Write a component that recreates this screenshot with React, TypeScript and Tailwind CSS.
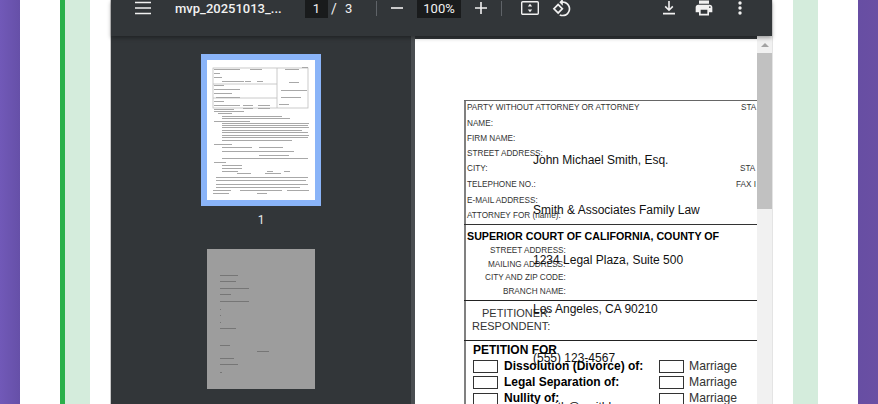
const labels: [string, number, number, string][] = [
  ['PARTY WITHOUT ATTORNEY OR ATTORNEY', 467, 102, 'text-[8.2px]'],
  ['NAME:', 467, 118, 'text-[8.2px]'],
  ['FIRM NAME:', 467, 133, 'text-[8.2px]'],
  ['STREET ADDRESS:', 467, 148, 'text-[8.2px]'],
  ['CITY:', 467, 163, 'text-[8.2px]'],
  ['TELEPHONE NO.:', 467, 179, 'text-[8.2px]'],
  ['E-MAIL ADDRESS:', 467, 195, 'text-[8.2px]'],
  ['ATTORNEY FOR (name):', 467, 210, 'text-[8.2px]'],
  ['STA', 741, 102, 'text-[8.2px]'],
  ['STA', 740, 163, 'text-[8.2px]'],
  ['FAX I', 736, 179, 'text-[8.2px]'],
  ['STREET ADDRESS:', 490, 245, 'text-[8.2px]'],
  ['MAILING ADDRESS:', 488, 259, 'text-[8.2px]'],
  ['CITY AND ZIP CODE:', 485, 272, 'text-[8.2px]'],
  ['BRANCH NAME:', 503, 286, 'text-[8.2px]'],
  ['PETITIONER:', 482, 307, 'text-[11px]'],
  ['RESPONDENT:', 472, 320, 'text-[11px]'],
  ['Marriage', 689, 360, 'text-[12.2px]'],
  ['Marriage', 689, 376, 'text-[12.2px]'],
  ['Marriage', 689, 392, 'text-[12.2px]'],
]

const boldLabels: [string, number, number, string][] = [
  ['SUPERIOR COURT OF CALIFORNIA, COUNTY OF', 467, 229, 'text-[10.7px]'],
  ['PETITION FOR', 473, 343, 'text-[12px]'],
  ['Dissolution (Divorce) of:', 504, 359, 'text-[12px]'],
  ['Legal Separation of:', 504, 375, 'text-[12px]'],
  ['Nullity of:', 504, 391, 'text-[12px]'],
]

const filled: [string, number][] = [
  ['John Michael Smith, Esq.', 153],
  ['Smith & Associates Family Law', 203],
  ['1234 Legal Plaza, Suite 500', 253],
  ['Los Angeles, CA 90210', 302],
  ['(555) 123-4567', 351],
  ['j.smith@smithlaw.com', 400],
]

const boxes: [number, number][] = [
  [473, 360],
  [473, 376],
  [473, 393],
  [659, 360],
  [659, 376],
  [659, 393],
]

// rough text lines in the first thumbnail: x, y, width
const thumbLines: [number, number, number][] = [
  [7, 9, 26], [43, 9, 12], [78, 9, 14], [95, 7, 6], [7, 13, 6], [7, 17, 8], [15, 21, 22], [38, 21, 6], [50, 21, 6],
  [7, 25, 10], [7, 29, 26], [7, 33, 18], [82, 22, 10], [74, 30, 26], [74, 37, 20],
  [9, 37, 24], [7, 41, 10], [7, 45, 26], [7, 49, 20], [36, 45, 10], [51, 45, 12], [36, 48, 10], [51, 48, 12], [72, 44, 10],
  [7, 51, 30], [11, 53, 14], [15, 56, 60], [15, 58, 68], [7, 61, 36],
  [15, 63, 87], [15, 65, 86], [15, 67, 87], [15, 70, 80], [15, 72, 86], [15, 75, 87], [15, 77, 86], [15, 80, 70],
  [7, 84, 18], [15, 87, 30], [52, 87, 24], [15, 91, 72], [52, 95, 30], [15, 98, 86],
  [7, 102, 12], [15, 105, 20], [15, 108, 20], [15, 111, 16], [60, 111, 6], [77, 111, 6],
  [30, 113, 14], [58, 113, 16], [9, 117, 92], [9, 120, 90], [9, 124, 92], [9, 127, 84],
  [6, 130, 18], [33, 130, 42], [80, 130, 22], [6, 133, 16], [50, 133, 10],
]

function ThumbOne() {
  return (
    <svg width="108" height="140" viewBox="0 0 108 140" className="bg-white">
      <g className="blur-[0.5px]">
        <g stroke="#bdbdbd" strokeWidth="0.8" fill="none">
          <rect x="6" y="8" width="95" height="40" />
          <path d="M70 8V48M6 24H70M6 38H70" />
        </g>
        <g fill="#a8a8a8">
          {thumbLines.map(([x, y, w], i) => (
            <rect key={i} x={x} y={y} width={w} height="1" />
          ))}
        </g>
      </g>
    </svg>
  )
}

const thumbTwoLines: [number, number, number][] = [
  [13, 26, 18], [13, 32, 16], [13, 39, 29], [13, 45, 11], [13, 52, 29], [13, 60, 1], [13, 66, 1], [13, 73, 1],
  [13, 79, 16], [13, 96, 10], [50, 102, 12], [13, 109, 14], [13, 115, 18], [13, 123, 2],
]

function ThumbTwo() {
  return (
    <svg width="108" height="140" viewBox="0 0 108 140" className="bg-[#9d9d9d]">
      <g fill="#666" opacity="0.7" className="blur-[0.4px]">
        {thumbTwoLines.map(([x, y, w], i) => (
          <rect key={i} x={x} y={y} width={w} height="1" />
        ))}
      </g>
    </svg>
  )
}

function Toolbar() {
  return (
    <div className="relative z-10 flex h-[36px] shrink-0 items-start bg-[#323639] pl-[24px] text-[#f1f1f1] shadow-[0_2px_4px_rgba(0,0,0,0.35)]">
      <svg width="16" height="16" viewBox="0 0 16 16">
        <path d="M0 2.5H16M0 8H16M0 13.5H16" stroke="#f1f1f1" strokeWidth="1.6" />
      </svg>
      <span className="ml-[24px] w-[108px] whitespace-nowrap text-[13px] font-medium leading-[18px]">mvp_20251013_...</span>
      <span className="ml-[22px] flex h-[18px] w-[23px] items-center justify-center bg-[#191b1c] text-[13px]">1</span>
      <span className="w-[12px] text-center text-[14px] leading-[18px]">/</span>
      <span className="ml-[5px] w-[10px] text-[13px] leading-[18px]">3</span>
      <span className="ml-[21px] mt-[1px] h-[15px] w-px bg-[#5f6368]" />
      <svg width="12" height="16" viewBox="0 0 12 16" className="ml-[14px]">
        <path d="M0 8H12" stroke="#f1f1f1" strokeWidth="1.6" />
      </svg>
      <span className="ml-[14px] flex h-[18px] w-[44px] items-center justify-center bg-[#191b1c] text-[13px]">100%</span>
      <svg width="12" height="16" viewBox="0 0 12 16" className="ml-[14px]">
        <path d="M0 8H12M6 2V14" stroke="#f1f1f1" strokeWidth="1.6" />
      </svg>
      <span className="ml-[14px] mt-[1px] h-[15px] w-px bg-[#5f6368]" />
      <svg width="18" height="16" viewBox="0 0 18 16" className="ml-[19px]">
        <rect x="0.7" y="1.7" width="16.6" height="12.6" rx="1" fill="none" stroke="#f1f1f1" strokeWidth="1.4" />
        <path d="M9 3.8L11.2 6.6H6.8ZM9 12.2L6.8 9.4H11.2Z" fill="#f1f1f1" />
      </svg>
      <svg width="20" height="20" viewBox="0 0 24 24" className="ml-[13px] -mt-[2px]" fill="#f1f1f1">
        <path d="M7.34 6.41L.86 12.9l6.49 6.48 6.49-6.48-6.5-6.49zM3.69 12.9l3.66-3.66L11 12.9l-3.66 3.66-3.65-3.66zm15.67-6.26C17.61 4.88 15.3 4 13 4V.76L8.76 5 13 9.24V6c1.79 0 3.58.68 4.95 2.05 2.73 2.73 2.73 7.17 0 9.9C16.58 19.32 14.79 20 13 20c-.97 0-1.94-.21-2.84-.61l-1.49 1.49C10.02 21.62 11.51 22 13 22c2.3 0 4.61-.88 6.36-2.64 3.52-3.51 3.52-9.21 0-12.72z" />
      </svg>
      <svg width="14" height="16" viewBox="0 0 14 16" className="ml-auto">
        <path d="M7 1V10M3.2 6.4L7 10.2L10.8 6.4M1 13.6H13" fill="none" stroke="#f1f1f1" strokeWidth="1.6" />
      </svg>
      <svg width="20" height="20" viewBox="0 0 24 24" className="ml-[18px] -mt-[2px]" fill="#f1f1f1">
        <path d="M19 8H5c-1.66 0-3 1.34-3 3v6h4v4h12v-4h4v-6c0-1.66-1.34-3-3-3zm-3 11H8v-5h8v5zm3-7c-.55 0-1-.45-1-1s.45-1 1-1 1 .45 1 1-.45 1-1 1zm-1-9H6v4h12V3z" />
      </svg>
      <svg width="4" height="16" viewBox="0 0 4 16" className="ml-[24px] mr-[30px]" fill="#f1f1f1">
        <circle cx="2" cy="3" r="1.7" />
        <circle cx="2" cy="8" r="1.7" />
        <circle cx="2" cy="13" r="1.7" />
      </svg>
    </div>
  )
}

function Sidebar() {
  return (
    <div className="flex w-[300px] shrink-0 flex-col items-center bg-[#323639] pt-[18px]">
      <div className="border-[6px] border-[#8ab4f8] leading-[0]">
        <ThumbOne />
      </div>
      <span className="mt-[7px] text-[12px] leading-[15px] text-[#e8eaed]">1</span>
      <div className="mt-[21px] leading-[0]">
        <ThumbTwo />
      </div>
    </div>
  )
}

// the pdf page: everything in it sits at its own place on the sheet
function PdfPage() {
  const ox = 415
  const oy = 36
  return (
    <div className="relative min-w-0 flex-1 overflow-hidden bg-white font-['Liberation_Sans',Arial,sans-serif] text-[#333]">
      <div className="absolute inset-x-0 top-0 h-[3px] bg-[#323639]" />
      <div className="absolute left-[49px] top-[64px] h-[304px] w-[2px] bg-[#808080]" />
      <div className="absolute left-[49px] right-0 top-[64px] h-px bg-[#666]" />
      <div className="absolute left-[49px] right-0 top-[188px] h-px bg-[#333]" />
      <div className="absolute left-[49px] right-0 top-[264px] h-px bg-[#222]" />
      <div className="absolute left-[49px] right-0 top-[304px] h-px bg-[#222]" />
      {labels.map(([text, x, y, size], i) => (
        <span
          key={i}
          className={`absolute whitespace-nowrap leading-[12px] ${size}`}
          style={{ left: x - ox, top: y - oy }}
        >
          {text}
        </span>
      ))}
      {boldLabels.map(([text, x, y, size]) => (
        <span
          key={text}
          className={`absolute whitespace-nowrap font-bold leading-[14px] text-black ${size}`}
          style={{ left: x - ox, top: y - oy }}
        >
          {text}
        </span>
      ))}
      {boxes.map(([x, y], i) => (
        <span
          key={i}
          className="absolute h-[13px] w-[25px] border border-[#333]"
          style={{ left: x - ox, top: y - oy }}
        />
      ))}
      {filled.map(([text, y]) => (
        <span
          key={text}
          className="absolute left-[118px] whitespace-nowrap text-[12px] leading-[14px] text-[#111]"
          style={{ top: y - oy }}
        >
          {text}
        </span>
      ))}
    </div>
  )
}

function Scrollbar() {
  return (
    <div className="flex w-[15px] shrink-0 flex-col items-center bg-[#f1f1f1]">
      <div className="flex h-[17px] w-full items-center justify-center">
        <div className="h-0 w-0 border-x-[4px] border-b-[4px] border-x-transparent border-b-[#a3a3a3]" />
      </div>
      <div className="h-[156px] w-full bg-[#c1c1c1]" />
    </div>
  )
}

export default function App() {
  return (
    <div className="flex h-[404px] w-[878px] overflow-hidden bg-white font-['Roboto',sans-serif]">
      <div className="w-[20px] shrink-0 bg-gradient-to-r from-[#7159b8] to-[#6650a8]" />
      <div className="ml-[40px] w-[5px] shrink-0 bg-[#2bb04b]" />
      <div className="w-[25px] shrink-0 bg-[#d4ecdc]" />
      <div className="ml-[20px] flex w-[663px] shrink-0 flex-col border-x border-l-[#c8c8c8] border-r-[#e4e4e4]">
        <Toolbar />
        <div className="flex min-h-0 flex-1">
          <Sidebar />
          <div className="w-[4px] shrink-0 bg-[#4a4e51]" />
          <PdfPage />
          <Scrollbar />
        </div>
      </div>
      <div className="ml-[20px] w-[25px] shrink-0 bg-[#d4ecdc]" />
      <div className="ml-[40px] w-[20px] shrink-0 bg-gradient-to-r from-[#674ea3] to-[#6a4fa3]" />
    </div>
  )
}
